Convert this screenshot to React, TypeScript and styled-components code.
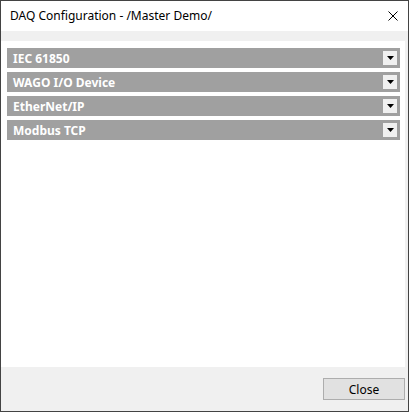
import React from 'react';
import styled, { createGlobalStyle } from 'styled-components';

const GlobalStyle = createGlobalStyle`
    html, body {
        margin: 0;
        padding: 0;
        background: #ffffff;
    }
`;

const Window = styled.div`
    width: 409px;
    height: 412px;
    box-sizing: border-box;
    border: 1px solid #434343;
    display: flex;
    flex-direction: column;
    background: #f0f0f0;
    font-family: "Noto Sans", "Open Sans", sans-serif;
    font-size: 12px;
    color: #000000;
`;

const TitleBar = styled.div`
    height: 30px;
    flex: none;
    background: #ffffff;
    display: flex;
    align-items: center;
    justify-content: space-between;
    padding-left: 9px;
    padding-right: 10px;
`;

const Title = styled.span`
    font-size: 12px;
    line-height: 16px;
`;

const CloseX = styled.div`
    width: 10px;
    height: 10px;
    display: flex;
`;

const Body = styled.div`
    flex: 1;
    display: flex;
    flex-direction: column;
    padding-top: 10px;
    padding-right: 3px;
`;

const Panel = styled.div`
    flex: 1;
    background: #ffffff;
    display: flex;
    flex-direction: column;
    gap: 4px;
    padding: 7px 5px 0 6px;
`;

const Row = styled.div`
    height: 20px;
    background: #a0a0a0;
    display: flex;
    align-items: center;
    justify-content: space-between;
    padding-left: 6px;
    padding-right: 3px;
`;

const RowLabel = styled.span`
    color: #ffffff;
    font-weight: 700;
    font-size: 12px;
`;

const DropButton = styled.div`
    width: 14px;
    height: 14px;
    background: #f0f0f0;
    display: flex;
    align-items: center;
    justify-content: center;
`;

const Footer = styled.div`
    height: 44px;
    flex: none;
    display: flex;
    justify-content: flex-end;
    align-items: flex-start;
    padding-top: 11px;
    box-sizing: border-box;
`;

const Button = styled.button`
    width: 82px;
    height: 22px;
    background: #e1e1e1;
    border: 1px solid #adadad;
    font-family: "Noto Sans", "Open Sans", sans-serif;
    font-size: 12px;
    color: #000000;
    padding: 0;
`;

const sections = ['IEC 61850', 'WAGO I/O Device', 'EtherNet/IP', 'Modbus TCP'];

export default function App() {
    return (
        <>
            <GlobalStyle />
            <Window>
                <TitleBar>
                    <Title>DAQ Configuration - /Master Demo/</Title>
                    <CloseX>
                        <svg width="10" height="10" viewBox="0 0 10 10">
                            <path d="M0.5 0.5 L9.5 9.5 M9.5 0.5 L0.5 9.5" stroke="#000" strokeWidth="1" />
                        </svg>
                    </CloseX>
                </TitleBar>
                <Body>
                    <Panel>
                        {sections.map((s) => (
                            <Row key={s}>
                                <RowLabel>{s}</RowLabel>
                                <DropButton>
                                    <svg width="7" height="4" viewBox="0 0 7 4">
                                        <path d="M0 0 H7 L3.5 4 Z" fill="#000" />
                                    </svg>
                                </DropButton>
                            </Row>
                        ))}
                    </Panel>
                    <Footer>
                        <Button>Close</Button>
                    </Footer>
                </Body>
            </Window>
        </>
    );
}
